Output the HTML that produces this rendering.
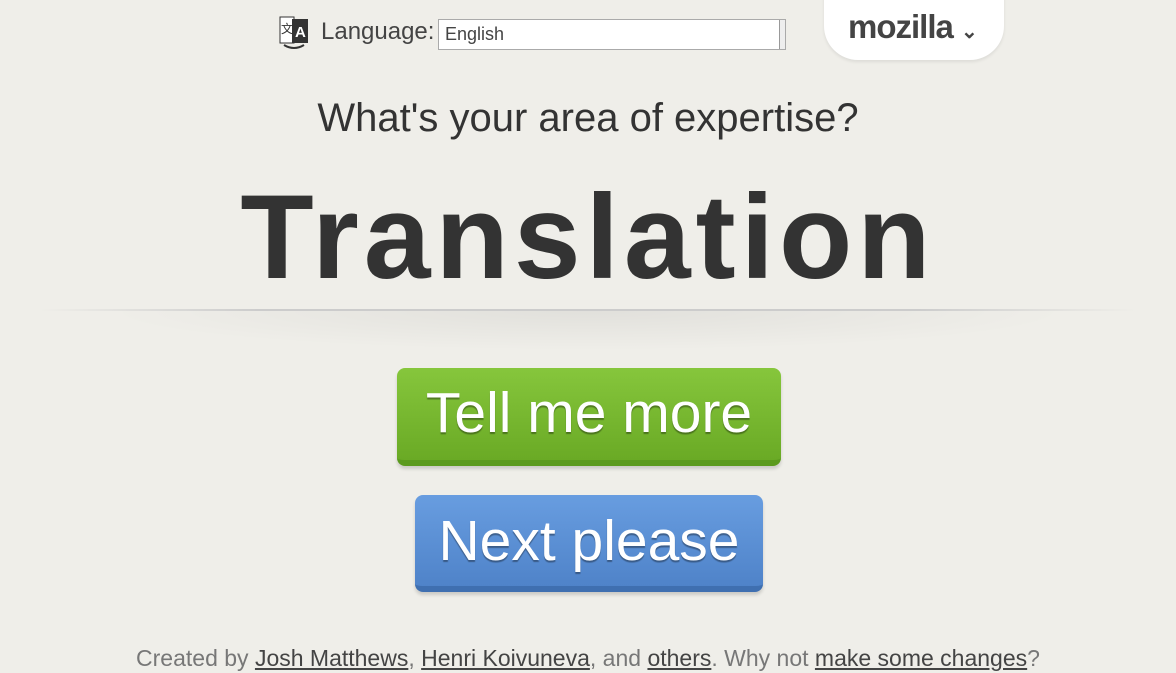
<!DOCTYPE html>
<html><head><style>
body{margin:0;width:1176px;height:673px;overflow:hidden;background:#efeee9;font-family:"Liberation Sans",sans-serif;position:relative;color:#333}
.abs{position:absolute}
.sel{left:438px;top:19px;width:348px;height:31px;border:1px solid #aaa;background:#fff;box-sizing:border-box;font-size:18px;color:#444;padding:4px 6px}
.tab{left:824px;top:-10px;width:180px;height:70px;background:#fff;border-radius:0 0 34px 34px;box-shadow:0 2px 3px rgba(0,0,0,.08)}
.btn{border-radius:8px;color:#fff;text-align:center;font-size:57px;text-shadow:0 2px 1px rgba(0,0,0,.35);box-sizing:border-box}
</style></head><body>
<svg class="abs" style="left:278px;top:15px" width="32" height="36" viewBox="0 0 32 36"><rect x="2" y="2" width="14" height="26" fill="#fff" stroke="#333"/><rect x="14" y="4" width="16" height="24" fill="#333"/><text x="17" y="22" fill="#fff" font-size="15" font-weight="bold" font-family="Liberation Sans">A</text><text x="3" y="18" font-size="12" fill="#333">文</text><path d="M6 30 q10 6 20 0" stroke="#333" fill="none" stroke-width="2"/></svg>
<div class="abs" style="left:321px;top:18px;font-size:24px;color:#444">Language:</div>
<div class="abs sel">English<div class="abs" style="right:0;top:0;width:5px;height:29px;border-left:1px solid #999;background:#eee"></div></div>
<div class="abs tab"></div>
<div class="abs" style="left:848px;top:8px;font-size:33px;font-weight:bold;color:#444;letter-spacing:-1px">mozilla <span style="font-size:20px">&#8964;</span></div>
<div class="abs" style="left:0;width:1176px;top:96px;text-align:center;font-size:40px;color:#333;font-weight:300">What's your area of expertise?</div>
<div class="abs" style="left:0;width:1176px;top:168px;text-align:center;font-size:120px;font-weight:bold;color:#333;letter-spacing:5px">Translation</div>
<div class="abs" style="left:40px;width:1096px;top:309px;height:2px;background:linear-gradient(90deg,transparent,#ccc 20%,#ccc 80%,transparent)"></div>
<div class="abs" style="left:100px;width:976px;top:311px;height:40px;background:radial-gradient(ellipse at top,rgba(0,0,0,.06),transparent 70%)"></div>
<div class="abs btn" style="left:397px;top:368px;width:384px;height:98px;background:linear-gradient(#86c63c,#6aaa25);border-bottom:6px solid #5b9a1e;line-height:90px;box-shadow:0 3px 3px rgba(0,0,0,.15)">Tell me more</div>
<div class="abs btn" style="left:415px;top:495px;width:348px;height:97px;background:linear-gradient(#689de0,#4f83c9);border-bottom:6px solid #3f6fb0;line-height:92px;box-shadow:0 3px 3px rgba(0,0,0,.15)">Next please</div>
<div class="abs" style="left:0;width:1176px;top:645px;text-align:center;font-size:23px;color:#777">Created by <u style="color:#444">Josh Matthews</u>, <u style="color:#444">Henri Koivuneva</u>, and <u style="color:#444">others</u>. Why not <u style="color:#444">make some changes</u>?</div>
</body></html>
